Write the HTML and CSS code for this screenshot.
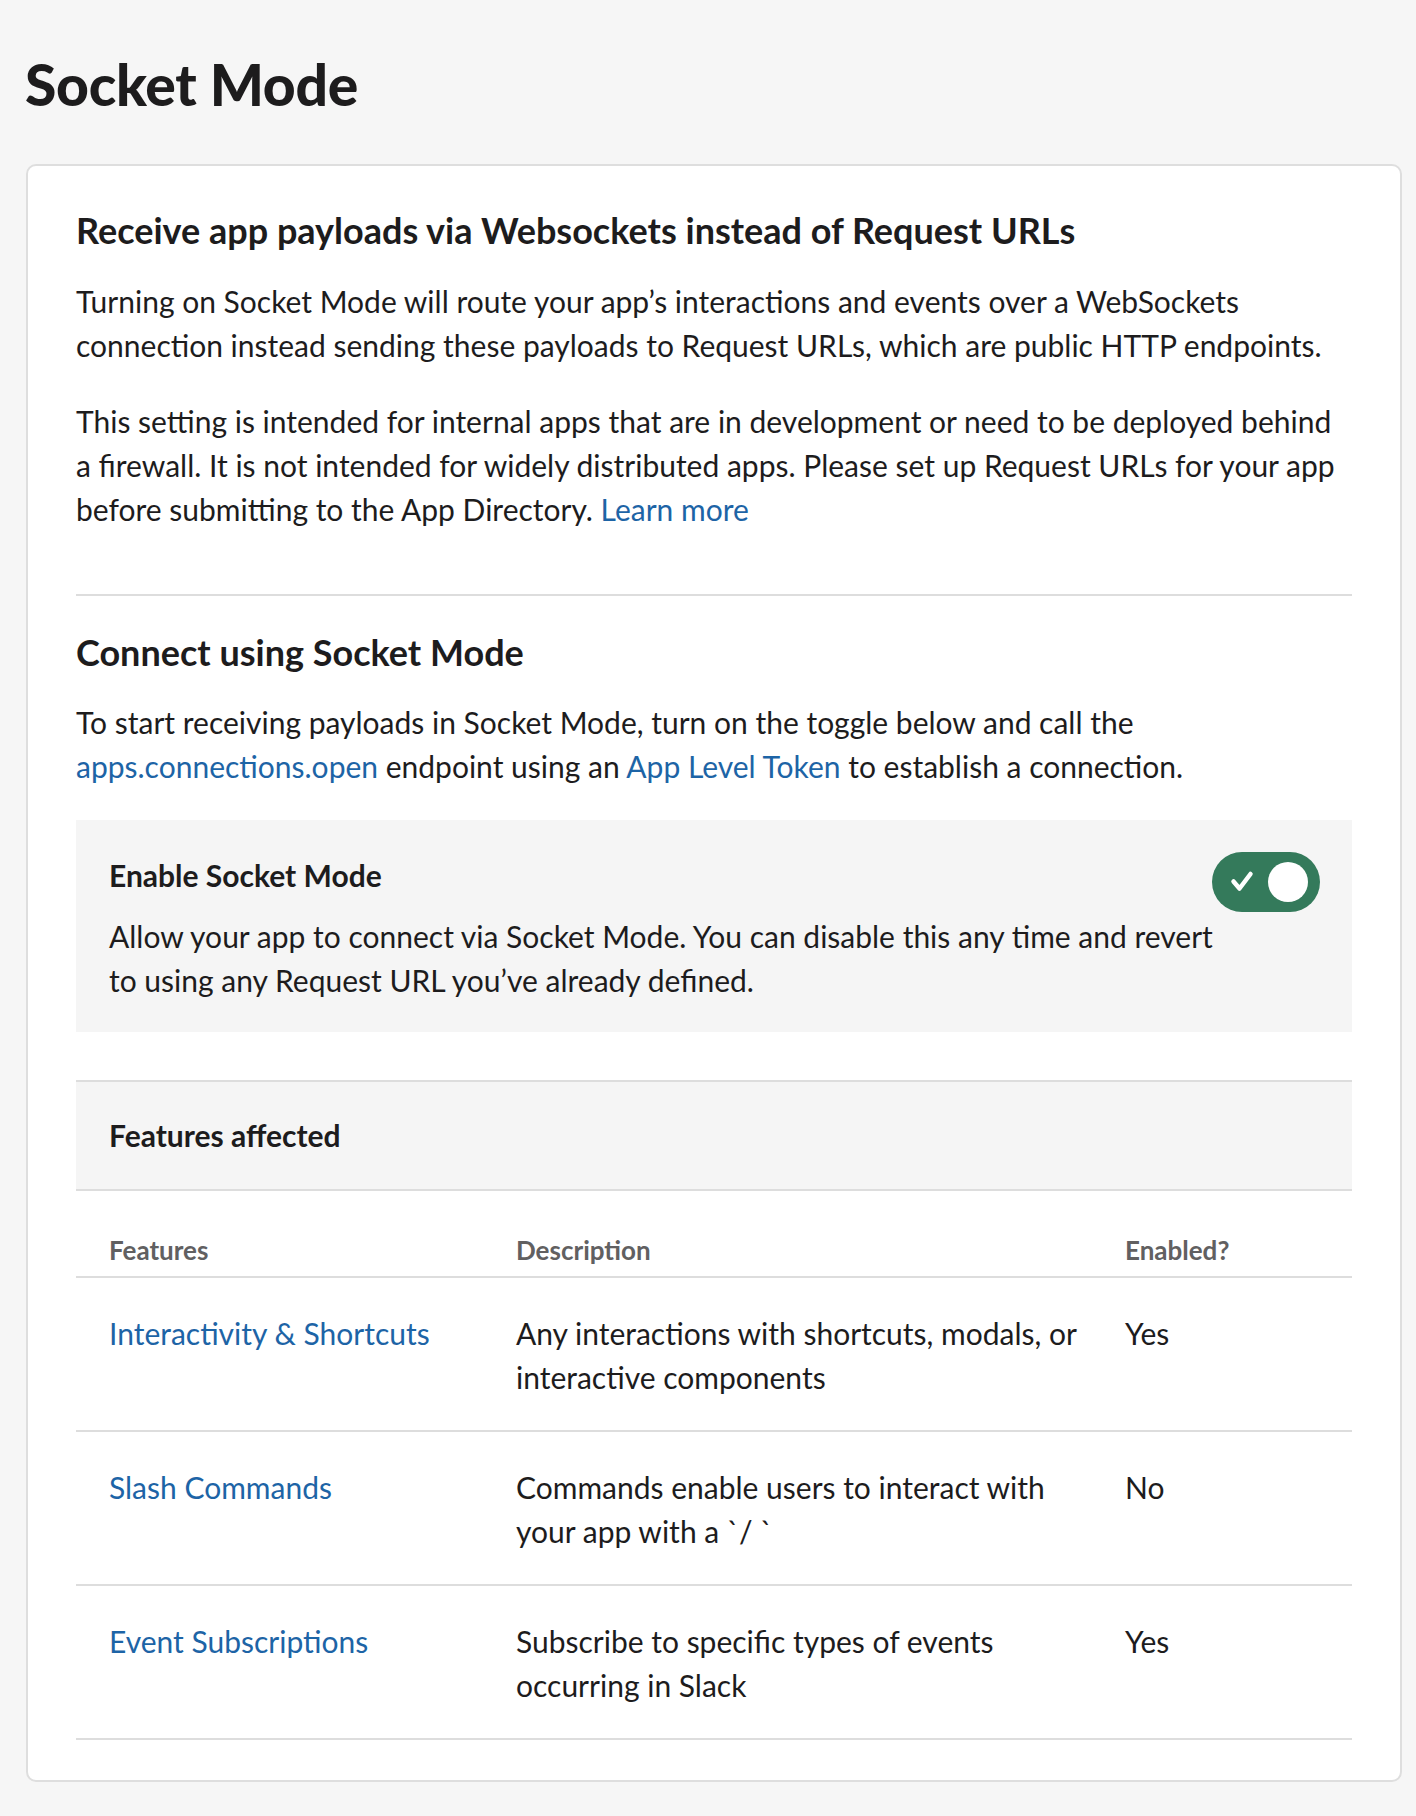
FILE: index.html
```html
<!DOCTYPE html>
<html lang="en">
<head>
<meta charset="utf-8">
<title>Socket Mode</title>
<link rel="stylesheet" href="styles.css">
</head>
<body>
<h1 class="page-title">Socket Mode</h1>
<div class="card">
  <h2 class="section-title">Receive app payloads via Websockets instead of Request URLs</h2>
  <p class="para">Turning on Socket Mode will route your app’s interactions and events over a WebSockets connection instead sending these payloads to Request URLs, which are public HTTP endpoints.</p>
  <p class="para para-gap">This setting is intended for internal apps that are in development or need to be deployed behind a firewall. It is not intended for widely distributed apps. Please set up Request URLs for your app before submitting to the App Directory. <a class="link" href="#">Learn more</a></p>
  <hr class="divider">
  <h2 class="section-title section-title-tight">Connect using Socket Mode</h2>
  <p class="para">To start receiving payloads in Socket Mode, turn on the toggle below and call the <a class="link" href="#">apps.connections.open</a> endpoint using an <a class="link" href="#">App Level Token</a> to establish a connection.</p>
  <div class="setting">
    <div class="setting-text">
      <div class="setting-title">Enable Socket Mode</div>
      <div class="setting-desc">Allow your app to connect via Socket Mode. You can disable this any time and revert to using any Request URL you’ve already defined.</div>
    </div>
    <div class="toggle" role="switch" aria-checked="true">
      <svg width="108" height="60" viewBox="0 0 108 60">
        <rect x="0" y="0" width="108" height="60" rx="30" fill="#347a5b"/>
        <path d="M21.5 29.5 L27.5 36.5 L38.5 22" fill="none" stroke="#fff" stroke-width="4.5" stroke-linecap="round" stroke-linejoin="round"/>
        <circle cx="76" cy="30" r="20" fill="#fff"/>
      </svg>
    </div>
  </div>
  <div class="features-head">Features affected</div>
  <div class="table">
    <div class="row head">
      <div class="cell">Features</div>
      <div class="cell">Description</div>
      <div class="cell">Enabled?</div>
    </div>
    <div class="row">
      <div class="cell"><a class="link" href="#">Interactivity &amp; Shortcuts</a></div>
      <div class="cell">Any interactions with shortcuts, modals, or interactive components</div>
      <div class="cell">Yes</div>
    </div>
    <div class="row">
      <div class="cell"><a class="link" href="#">Slash Commands</a></div>
      <div class="cell">Commands enable users to interact with your app with a `/ `</div>
      <div class="cell">No</div>
    </div>
    <div class="row">
      <div class="cell"><a class="link" href="#">Event Subscriptions</a></div>
      <div class="cell">Subscribe to specific types of events occurring in Slack</div>
      <div class="cell">Yes</div>
    </div>
  </div>
</div>
</body>
</html>
```
FILE: styles.css
```css
* { box-sizing: border-box; }
html, body {
  margin: 0;
  padding: 0;
  background: #f6f6f6;
}
body {
  font-family: Lato, "Noto Sans", sans-serif;
  color: #1d1c1d;
  height: 1816px;
}
.page-title {
  margin: 0;
  padding: 50px 0 0 25px;
  font-size: 57px;
  line-height: 68px;
  font-weight: 900;
  letter-spacing: -0.3px;
}
.card {
  margin: 46px 14px 0 26px;
  background: #fff;
  border: 2px solid #dedede;
  border-radius: 10px;
  padding: 44px 48px 40px 48px;
}
.section-title {
  margin: 0 0 29px 0;
  font-size: 36px;
  line-height: 40px;
  font-weight: 700;
}
.section-title-tight { margin-bottom: 28px; }
.para {
  margin: 0;
  font-size: 30px;
  line-height: 44px;
}
.para-gap { margin-top: 32px; }
.link {
  color: #1d64a6;
  text-decoration: none;
}
.divider {
  border: 0;
  border-top: 2px solid #dddddd;
  margin: 63px 0 36px 0;
  height: 0;
}
.setting {
  margin-top: 32px;
  background: #f5f5f5;
  display: flex;
  align-items: flex-start;
  padding: 32px 32px 30px 33px;
}
.setting-text {
  flex: 1;
  padding-top: 1px;
  font-size: 30px;
  line-height: 44px;
  margin-right: -12px;
}
.setting-title {
  font-weight: 700;
  margin-bottom: 17px;
}
.toggle {
  width: 108px;
  height: 60px;
  flex: none;
}
.toggle svg { display: block; }
.features-head {
  margin-top: 48px;
  background: #f5f5f5;
  border-top: 2px solid #dddddd;
  border-bottom: 2px solid #dddddd;
  padding: 31px 33px 32px 33px;
  font-size: 30px;
  line-height: 44px;
  font-weight: 700;
}
.table {
  font-size: 30px;
  line-height: 44px;
}
.row {
  display: grid;
  grid-template-columns: 407px 609px 1fr;
  border-bottom: 2px solid #dddddd;
  padding: 33px 0 31px 0;
}
.row.head {
  padding: 37px 0 4px 0;
  font-size: 26px;
  font-weight: 700;
  color: #616061;
}
.cell {
  padding-left: 33px;
}
```
